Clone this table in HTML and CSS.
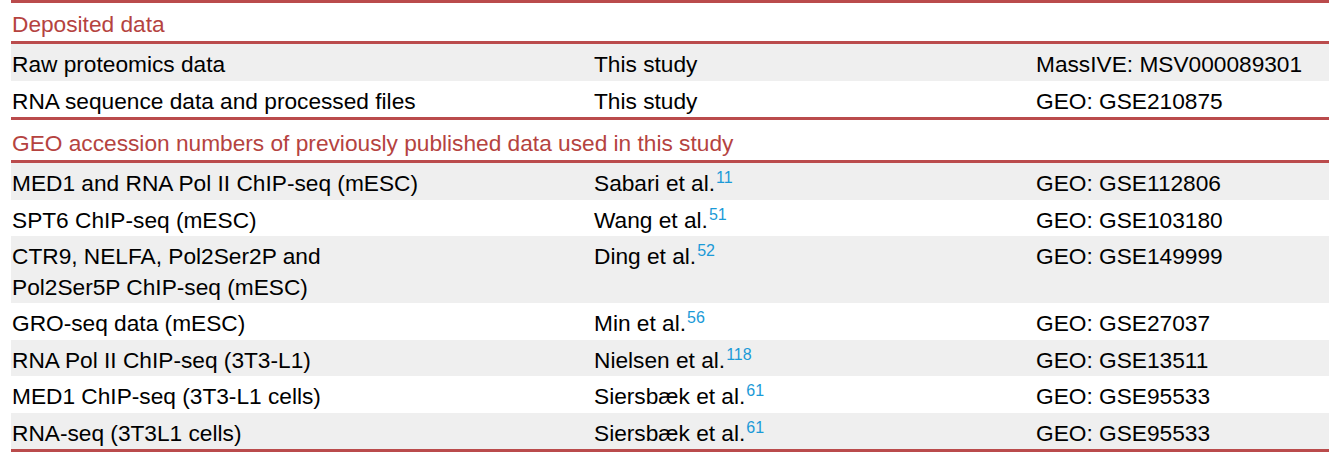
FILE: index.html
```html
<!DOCTYPE html>
<html lang="en">
<head>
<meta charset="utf-8">
<title>Deposited data</title>
<link rel="stylesheet" href="styles.css">
</head>
<body>
<div class="table">
  <div class="rule"></div>
  <div class="section">Deposited data</div>
  <div class="rule"></div>
  <div class="row shade"><div>Raw proteomics data</div><div>This study</div><div>MassIVE: MSV000089301</div></div>
  <div class="row"><div>RNA sequence data and processed files</div><div>This study</div><div>GEO: GSE210875</div></div>
  <div class="rule"></div>
  <div class="section section-tall">GEO accession numbers of previously published data used in this study</div>
  <div class="rule"></div>
  <div class="row shade"><div>MED1 and RNA Pol II ChIP-seq (mESC)</div><div>Sabari et al.<sup class="ref">11</sup></div><div>GEO: GSE112806</div></div>
  <div class="row"><div>SPT6 ChIP-seq (mESC)</div><div>Wang et al.<sup class="ref">51</sup></div><div>GEO: GSE103180</div></div>
  <div class="row shade"><div>CTR9, NELFA, Pol2Ser2P and<br>Pol2Ser5P ChIP-seq (mESC)</div><div>Ding et al.<sup class="ref">52</sup></div><div>GEO: GSE149999</div></div>
  <div class="row"><div>GRO-seq data (mESC)</div><div>Min et al.<sup class="ref">56</sup></div><div>GEO: GSE27037</div></div>
  <div class="row shade"><div>RNA Pol II ChIP-seq (3T3-L1)</div><div>Nielsen et al.<sup class="ref">118</sup></div><div>GEO: GSE13511</div></div>
  <div class="row"><div>MED1 ChIP-seq (3T3-L1 cells)</div><div>Siersbæk et al.<sup class="ref">61</sup></div><div>GEO: GSE95533</div></div>
  <div class="row shade"><div>RNA-seq (3T3L1 cells)</div><div>Siersbæk et al.<sup class="ref">61</sup></div><div>GEO: GSE95533</div></div>
  <div class="rule"></div>
</div>
</body>
</html>
```
FILE: styles.css
```css
html, body {
  margin: 0;
  padding: 0;
  background: #ffffff;
  overflow: hidden;
}

body {
  font-family: "Liberation Sans", Arial, Helvetica, sans-serif;
  font-size: 22.7px;
  color: #000000;
}

.table {
  margin-left: 11px;
  display: flex;
  flex-direction: column;
}

.rule {
  height: 3px;
  background: #ba4b4c;
}

.section {
  color: #b5433f;
  line-height: 30px;
  padding: 6px 0 2px 1px;
}

.section-tall {
  padding: 8px 0 2px 1px;
}

.row {
  display: grid;
  grid-template-columns: 582px 442px 1fr;
  line-height: 30.5px;
  padding: 5px 0 1px;
}

.row > div {
  padding-left: 1px;
}

.shade {
  background: #efefef;
}

.ref {
  color: #1b9ad7;
  font-size: 16px;
  line-height: 0;
  vertical-align: 8px;
  margin-left: 1px;
}
```
